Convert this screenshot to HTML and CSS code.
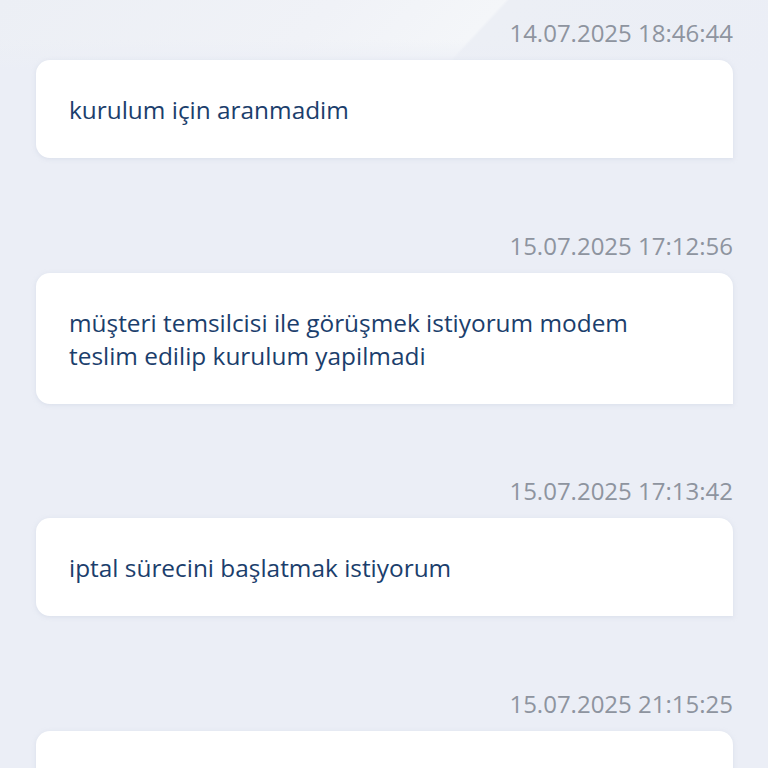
FILE: index.html
```html
<!DOCTYPE html>
<html lang="tr">
<head>
<meta charset="utf-8">
<link rel="stylesheet" href="styles.css">
</head>
<body>
<main class="thread">
  <section class="msg">
    <div class="time">14.07.2025 18:46:44</div>
    <div class="bubble">kurulum için aranmadim</div>
  </section>
  <section class="msg">
    <div class="time">15.07.2025 17:12:56</div>
    <div class="bubble">müşteri temsilcisi ile görüşmek istiyorum modem teslim edilip kurulum yapilmadi</div>
  </section>
  <section class="msg">
    <div class="time">15.07.2025 17:13:42</div>
    <div class="bubble">iptal sürecini başlatmak istiyorum</div>
  </section>
  <section class="msg">
    <div class="time">15.07.2025 21:15:25</div>
    <div class="bubble">&nbsp;</div>
  </section>
</main>
</body>
</html>
```
FILE: styles.css
```css
html, body {
  margin: 0;
  padding: 0;
}
body {
  background-color: #ebeef6;
  background-image:
    linear-gradient(to bottom, rgba(235,238,246,0) 0px, rgba(235,238,246,0) 40px, #ebeef6 70px),
    linear-gradient(133deg, #eceff5 0%, #f0f2f7 40%, #f4f6f9 60%, #eceff5 60.5%, #ebeef6 100%);
  background-size: 100% 80px, 100% 80px;
  background-repeat: no-repeat;
  font-family: "Open Sans", "Noto Sans", sans-serif;
  height: 768px;
  overflow: hidden;
}
.thread {
  padding: 18px 35px 0 36px;
  display: flex;
  flex-direction: column;
  gap: 72.5px;
}
.msg {
  display: flex;
  flex-direction: column;
  gap: 12px;
}
.time {
  text-align: right;
  font-size: 24px;
  line-height: 30px;
  color: #8e949f;
}
.bubble {
  background: #ffffff;
  border-radius: 14px 14px 0 14px;
  padding: 33px 33px 32px;
  font-size: 24.4px;
  line-height: 33px;
  color: #1b3e6c;
  box-shadow: 0 1px 4px rgba(200, 208, 224, 0.5);
}
```
